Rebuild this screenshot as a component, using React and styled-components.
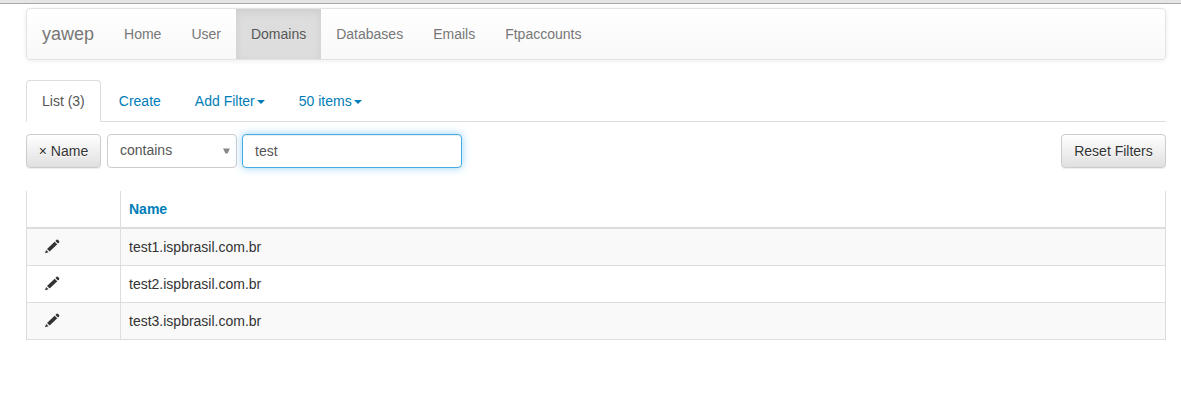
import React from "react";
import styled, { createGlobalStyle } from "styled-components";

const GlobalStyle = createGlobalStyle`
  *, *::before, *::after { box-sizing: border-box; }
  body {
    margin: 0;
    background: #fff;
    color: #333;
    font: 14px/20px "Liberation Sans", Arial, sans-serif;
  }
`;

const TopEdge = styled.div`
  height: 4px;
  background: #e5e5e5;
  border-bottom: 1px solid #a9a9a9;
`;

const Container = styled.main`
  width: 1140px;
  margin: 4px 0 0 26px;
`;

const Navbar = styled.nav`
  display: flex;
  height: 52px;
  margin-bottom: 20px;
  border: 1px solid #e3e3e3;
  border-radius: 4px;
  background: linear-gradient(to bottom, #fff 0%, #f8f8f8 100%);
  box-shadow: inset 0 1px 0 rgba(255, 255, 255, 0.15), 0 1px 5px rgba(0, 0, 0, 0.075);
`;

const Brand = styled.a`
  padding: 15px;
  font-size: 18px;
  color: #777;
  text-shadow: 0 1px 0 rgba(255, 255, 255, 0.25);
`;

const NavItem = styled.a`
  padding: 15px;
  color: ${(p) => (p.$active ? "#555" : "#777")};
  text-shadow: 0 1px 0 rgba(255, 255, 255, 0.25);
  background: ${(p) => (p.$active ? "#ddd" : "transparent")};
  box-shadow: ${(p) => (p.$active ? "inset 0 3px 9px rgba(0, 0, 0, 0.075)" : "none")};
`;

const Tabs = styled.div`
  display: flex;
  height: 42px;
  border-bottom: 1px solid #ddd;
`;

const Tab = styled.a`
  display: flex;
  align-items: center;
  height: 42px;
  margin-right: 2px;
  padding: 0 15px;
  border: 1px solid ${(p) => (p.$active ? "#ddd" : "transparent")};
  border-bottom-color: ${(p) => (p.$active ? "#fff" : "transparent")};
  border-radius: 4px 4px 0 0;
  background: ${(p) => (p.$active ? "#fff" : "transparent")};
  color: ${(p) => (p.$active ? "#555" : "#007db8")};
`;

const Caret = styled.span`
  margin: 2px 0 0 2px;
  border-top: 4px solid currentColor;
  border-left: 4px solid transparent;
  border-right: 4px solid transparent;
`;

const Filters = styled.div`
  display: flex;
  margin: 12px 0 23px;
`;

const Button = styled.button`
  width: ${(p) => p.$width}px;
  height: 34px;
  padding: 0;
  margin-left: ${(p) => (p.$end ? "auto" : "0")};
  border: 1px solid #ccc;
  border-radius: 4px;
  background: linear-gradient(to bottom, #fff 0%, #e0e0e0 100%);
  box-shadow: inset 0 1px 0 rgba(255, 255, 255, 0.15), 0 1px 1px rgba(0, 0, 0, 0.075);
  color: #333;
  font: inherit;
  text-shadow: 0 1px 0 #fff;
  white-space: nowrap;
`;

const Select = styled.div`
  display: flex;
  justify-content: space-between;
  width: 130px;
  height: 34px;
  margin: 0 5px 0 6px;
  padding: 5px 6px 0 12px;
  border: 1px solid #ccc;
  border-radius: 4px;
  color: #555;
`;

const SelectArrow = styled.svg`
  width: 7px;
  height: 6px;
  margin-top: 8px;
  fill: #888;
`;

const Input = styled.input`
  width: 220px;
  height: 34px;
  padding: 6px 12px;
  border: 1px solid #46abe6;
  border-radius: 4px;
  outline: 0;
  background: #fff;
  box-shadow: inset 0 1px 1px rgba(0, 0, 0, 0.075), 0 0 8px rgba(82, 180, 236, 0.6);
  color: #555;
  font: inherit;
`;

const Table = styled.table`
  width: 100%;
  table-layout: fixed;
  border-spacing: 0;
  border-left: 1px solid #ddd;
`;

const HeadCell = styled.th`
  width: ${(p) => (p.$narrow ? "94px" : "auto")};
  height: 38px;
  padding: 0 8px;
  border-right: 1px solid #ddd;
  border-bottom: 2px solid #ddd;
  color: #007db8;
  text-align: left;
`;

const Row = styled.tr`
  background: ${(p) => (p.$striped ? "#f9f9f9" : "#fff")};
`;

const Cell = styled.td`
  height: 37px;
  padding: 0 8px;
  border-right: 1px solid #ddd;
  border-bottom: 1px solid #ddd;
`;

const EditIcon = styled.svg`
  display: block;
  width: 15px;
  height: 15px;
  margin: -2px 0 0 10px;
  fill: #333;
`;

const Pencil = () => (
  <EditIcon viewBox="0 0 15 15">
    <path d="M0 14.2 1.1 10.9 3.5 13.2Z" />
    <path d="M2 9.9 9.6 2.7 12.3 5.3 4.7 12.5Z" />
    <path d="M10.4 1.9 11.6.8Q12.2.3 12.8.8L14.1 2.1Q14.6 2.7 14.1 3.3L13 4.4Z" />
  </EditIcon>
);

const sections = ["Home", "User", "Domains", "Databases", "Emails", "Ftpaccounts"];
const domains = ["test1.ispbrasil.com.br", "test2.ispbrasil.com.br", "test3.ispbrasil.com.br"];

export default function App() {
  return (
    <>
      <GlobalStyle />
      <TopEdge />
      <Container>
        <Navbar>
          <Brand>yawep</Brand>
          {sections.map((name) => (
            <NavItem key={name} $active={name === "Domains"}>{name}</NavItem>
          ))}
        </Navbar>
        <Tabs>
          <Tab $active>List (3)</Tab>
          <Tab>Create</Tab>
          <Tab>Add Filter<Caret /></Tab>
          <Tab>50 items<Caret /></Tab>
        </Tabs>
        <Filters>
          <Button $width={75}>× Name</Button>
          <Select>
            contains
            <SelectArrow viewBox="0 0 7 6"><path d="M0 .5H7L4.5 5.5H2.5Z" /></SelectArrow>
          </Select>
          <Input defaultValue="test" />
          <Button $width={105} $end>Reset Filters</Button>
        </Filters>
        <Table>
          <thead>
            <tr>
              <HeadCell $narrow />
              <HeadCell>Name</HeadCell>
            </tr>
          </thead>
          <tbody>
            {domains.map((domain, i) => (
              <Row key={domain} $striped={i % 2 === 0}>
                <Cell><Pencil /></Cell>
                <Cell>{domain}</Cell>
              </Row>
            ))}
          </tbody>
        </Table>
      </Container>
    </>
  );
}
